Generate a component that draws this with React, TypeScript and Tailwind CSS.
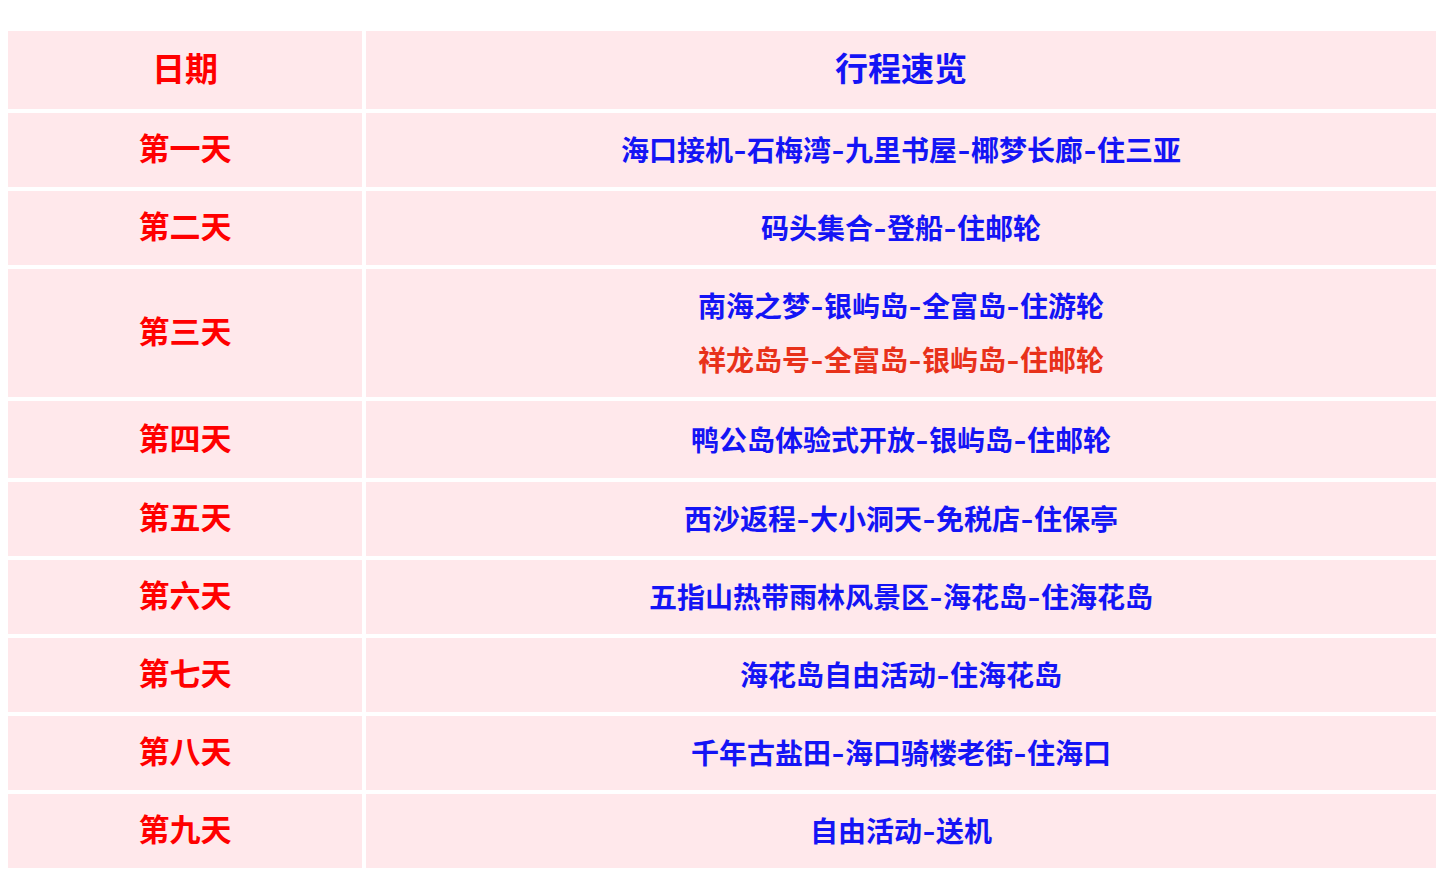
const rows: { day: string; plan: { text: string; alt?: boolean }[]; h: string }[] = [
  { day: '第一天', plan: [{ text: '海口接机-石梅湾-九里书屋-椰梦长廊-住三亚' }], h: 'h-[74px]' },
  { day: '第二天', plan: [{ text: '码头集合-登船-住邮轮' }], h: 'h-[74px]' },
  {
    day: '第三天',
    plan: [{ text: '南海之梦-银屿岛-全富岛-住游轮' }, { text: '祥龙岛号-全富岛-银屿岛-住邮轮', alt: true }],
    h: 'h-[128px]',
  },
  { day: '第四天', plan: [{ text: '鸭公岛体验式开放-银屿岛-住邮轮' }], h: 'h-[77px]' },
  { day: '第五天', plan: [{ text: '西沙返程-大小洞天-免税店-住保亭' }], h: 'h-[74px]' },
  { day: '第六天', plan: [{ text: '五指山热带雨林风景区-海花岛-住海花岛' }], h: 'h-[74px]' },
  { day: '第七天', plan: [{ text: '海花岛自由活动-住海花岛' }], h: 'h-[74px]' },
  { day: '第八天', plan: [{ text: '千年古盐田-海口骑楼老街-住海口' }], h: 'h-[74px]' },
  { day: '第九天', plan: [{ text: '自由活动-送机' }], h: 'h-[74px]' },
]

// the source font draws "-" half-width, so give each dash a fixed box
function Plan({ text }: { text: string }) {
  const parts = text.split('-')
  return (
    <>
      {parts.map((p, i) => (
        <span key={i}>
          {i > 0 && <span className="inline-block w-[14px] scale-x-125 text-center">-</span>}
          {p}
        </span>
      ))}
    </>
  )
}

export default function App() {
  return (
    <div className="min-h-[882px] bg-white pt-[31px] pl-2 font-['Noto_Sans_CJK_SC',sans-serif] font-bold">
      <div className="grid grid-cols-[354px_1070px] gap-1">
        <div className="flex h-[78px] items-center justify-center bg-[#ffe8eb] pb-[5px] text-[33px] text-[#ff0000]">
          日期
        </div>
        <div className="flex h-[78px] items-center justify-center bg-[#ffe8eb] pb-[5px] text-[33px] text-[#1414f5]">
          行程速览
        </div>
        {rows.map((r) => (
          <div key={r.day} className="contents">
            <div className={`flex items-center justify-center bg-[#ffe8eb] pb-[5px] text-[31px] text-[#ff0000] ${r.h}`}>
              {r.day}
            </div>
            <div className={`flex flex-col items-center justify-center bg-[#ffe8eb] pb-[2px] text-[28px] leading-[54px] ${r.h}`}>
              {r.plan.map((p) => (
                <span key={p.text} className={p.alt ? 'text-[#e8311a]' : 'text-[#1414f5]'}>
                  <Plan text={p.text} />
                </span>
              ))}
            </div>
          </div>
        ))}
      </div>
    </div>
  )
}
